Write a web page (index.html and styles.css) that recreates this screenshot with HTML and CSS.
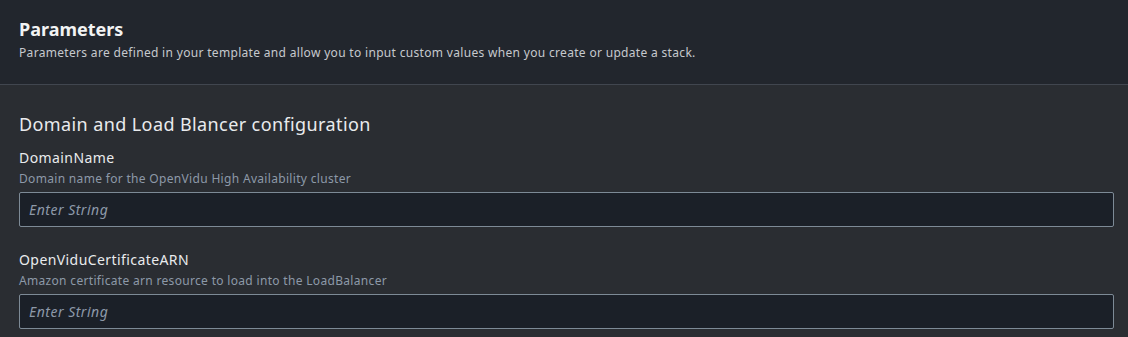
FILE: index.html
```html
<!DOCTYPE html>
<html lang="en">
<head>
<meta charset="utf-8">
<link rel="stylesheet" href="styles.css">
</head>
<body>
<div class="page">
  <header class="header">
    <h2 class="title">Parameters</h2>
    <p class="subtitle">Parameters are defined in your template and allow you to input custom values when you create or update a stack.</p>
  </header>
  <section class="content">
    <h3 class="section-title">Domain and Load Blancer configuration</h3>
    <div class="field">
      <label class="label">DomainName</label>
      <div class="desc">Domain name for the OpenVidu High Availability cluster</div>
      <input class="input" type="text" placeholder="Enter String">
    </div>
    <div class="field">
      <label class="label">OpenViduCertificateARN</label>
      <div class="desc">Amazon certificate arn resource to load into the LoadBalancer</div>
      <input class="input" type="text" placeholder="Enter String">
    </div>
  </section>
</div>
</body>
</html>
```

FILE: styles.css
```css
* { box-sizing: border-box; }
html, body { margin: 0; padding: 0; }
body {
  background: #2a2d32;
  font-family: "Noto Sans", "Open Sans", sans-serif;
  color: #e9ebed;
}
.page { width: 1128px; height: 337px; overflow: hidden; }
.header {
  background: #22262d;
  border-bottom: 1px solid #41464f;
  height: 85px;
  padding: 16px 19px 0;
}
.title {
  margin: 0;
  font-size: 18px;
  line-height: 26px;
  font-weight: 700;
  color: #f2f3f3;
}
.subtitle {
  margin: 1px 0 0;
  font-size: 12px;
  line-height: 20px;
  letter-spacing: 0.32px;
  color: #c6c9cd;
}
.content {
  padding: 26px 14px 0 19px;
}
.section-title {
  margin: 0 0 10px;
  font-size: 18px;
  line-height: 26px;
  font-weight: 400;
  letter-spacing: 0.4px;
  color: #e9ebed;
}
.field { display: flex; flex-direction: column; margin-bottom: 22px; }
.label {
  font-size: 14px;
  line-height: 22px;
  letter-spacing: 0.42px;
  color: #e9ebed;
}
.desc {
  font-size: 12px;
  line-height: 20px;
  letter-spacing: 0.32px;
  color: #8d99a8;
  margin-bottom: 3px;
}
.input {
  height: 35px;
  width: 100%;
  background: #1b2028;
  border: 1px solid #7d8a96;
  border-radius: 2px;
  padding: 0 9px;
  font-family: "Noto Sans", "Open Sans", sans-serif;
  font-size: 14px;
  letter-spacing: 0.5px;
  color: #e9ebed;
  outline: none;
}
.input::placeholder {
  font-style: italic;
  color: #8d99a8;
  opacity: 1;
}
```
